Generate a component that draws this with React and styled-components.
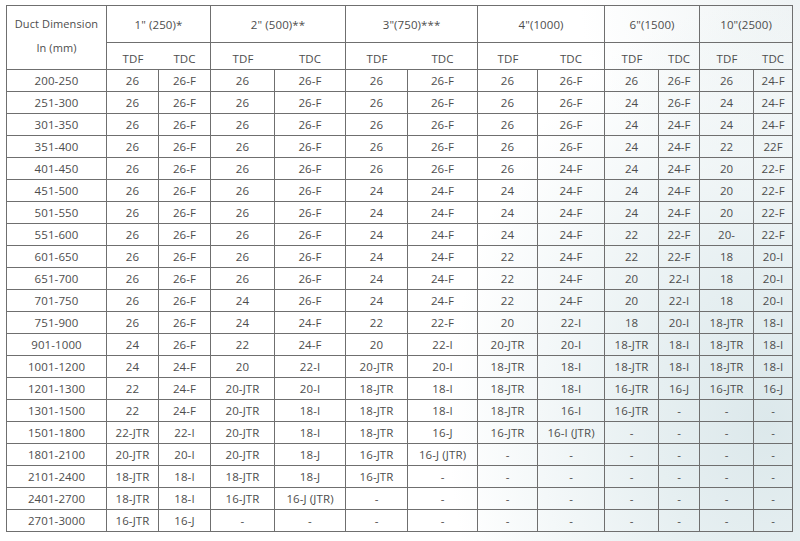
import React from "react";
import styled, { createGlobalStyle } from "styled-components";

const Global = createGlobalStyle`
  html, body { margin: 0; padding: 0; }
  body {
    width: 800px;
    height: 541px;
    overflow: hidden;
    background:
      radial-gradient(ellipse 320px 420px at 96% 78%, #dce8eb 0%, #e6eff1 35%, rgba(255,255,255,0) 100%),
      radial-gradient(ellipse 220px 200px at 100% 0%, #eef3f4 0%, rgba(255,255,255,0) 100%),
      #ffffff;
    font-family: "Open Sans", "Noto Sans", sans-serif;
    color: #4d4d4d;
  }
`;

const Page = styled.div`
  padding: 5px 0 0 6px;
`;

const Table = styled.table`
  border-collapse: separate;
  border-spacing: 0;
  table-layout: fixed;
  width: 787px;
  border-top: 1px solid #6f6f6f;
  border-left: 1px solid #6f6f6f;
`;

const Col = styled.col`
  width: ${(p) => p.$w}px;
`;

const Cell = styled.td`
  padding: 0;
  text-align: center;
  white-space: nowrap;
  border-right: 1px solid #6f6f6f;
  border-bottom: 1px solid #6f6f6f;
  font-size: 11px;
  letter-spacing: 0.1px;
`;

const DimHead = styled(Cell)`
  vertical-align: top;
  font-size: 11px;
  line-height: 24px;
  padding-top: 6px;
`;

const GroupHead = styled(Cell)`
  height: 36px;
  font-size: 11.5px;
`;

const SubHead = styled(Cell)`
  height: 27px;
  font-size: 11.5px;
  padding-top: 4px;
  box-sizing: border-box;
  border-right: ${(p) => (p.$first ? "none" : "1px solid #6f6f6f")};
`;

const DataCell = styled(Cell)`
  height: 21px;
  font-size: 11.5px;
`;

const widths = [100, 52, 52, 64, 71, 62, 70, 60, 67, 54, 41, 54, 39];

const groups = [
  '1" (250)*',
  '2" (500)**',
  '3"(750)***',
  '4"(1000)',
  '6"(1500)',
  '10"(2500)',
];

const rows = [
  ["200-250", "26", "26-F", "26", "26-F", "26", "26-F", "26", "26-F", "26", "26-F", "26", "24-F"],
  ["251-300", "26", "26-F", "26", "26-F", "26", "26-F", "26", "26-F", "24", "26-F", "24", "24-F"],
  ["301-350", "26", "26-F", "26", "26-F", "26", "26-F", "26", "26-F", "24", "24-F", "24", "24-F"],
  ["351-400", "26", "26-F", "26", "26-F", "26", "26-F", "26", "26-F", "24", "24-F", "22", "22F"],
  ["401-450", "26", "26-F", "26", "26-F", "26", "26-F", "26", "24-F", "24", "24-F", "20", "22-F"],
  ["451-500", "26", "26-F", "26", "26-F", "24", "24-F", "24", "24-F", "24", "24-F", "20", "22-F"],
  ["501-550", "26", "26-F", "26", "26-F", "24", "24-F", "24", "24-F", "24", "24-F", "20", "22-F"],
  ["551-600", "26", "26-F", "26", "26-F", "24", "24-F", "24", "24-F", "22", "22-F", "20-", "22-F"],
  ["601-650", "26", "26-F", "26", "26-F", "24", "24-F", "22", "24-F", "22", "22-F", "18", "20-I"],
  ["651-700", "26", "26-F", "26", "26-F", "24", "24-F", "22", "24-F", "20", "22-I", "18", "20-I"],
  ["701-750", "26", "26-F", "24", "26-F", "24", "24-F", "22", "24-F", "20", "22-I", "18", "20-I"],
  ["751-900", "26", "26-F", "24", "24-F", "22", "22-F", "20", "22-I", "18", "20-I", "18-JTR", "18-I"],
  ["901-1000", "24", "26-F", "22", "24-F", "20", "22-I", "20-JTR", "20-I", "18-JTR", "18-I", "18-JTR", "18-I"],
  ["1001-1200", "24", "24-F", "20", "22-I", "20-JTR", "20-I", "18-JTR", "18-I", "18-JTR", "18-I", "18-JTR", "18-I"],
  ["1201-1300", "22", "24-F", "20-JTR", "20-I", "18-JTR", "18-I", "18-JTR", "18-I", "16-JTR", "16-J", "16-JTR", "16-J"],
  ["1301-1500", "22", "24-F", "20-JTR", "18-I", "18-JTR", "18-I", "18-JTR", "16-I", "16-JTR", "-", "-", "-"],
  ["1501-1800", "22-JTR", "22-I", "20-JTR", "18-I", "18-JTR", "16-J", "16-JTR", "16-I (JTR)", "-", "-", "-", "-"],
  ["1801-2100", "20-JTR", "20-I", "20-JTR", "18-J", "16-JTR", "16-J (JTR)", "-", "-", "-", "-", "-", "-"],
  ["2101-2400", "18-JTR", "18-I", "18-JTR", "18-J", "16-JTR", "-", "-", "-", "-", "-", "-", "-"],
  ["2401-2700", "18-JTR", "18-I", "16-JTR", "16-J (JTR)", "-", "-", "-", "-", "-", "-", "-", "-"],
  ["2701-3000", "16-JTR", "16-J", "-", "-", "-", "-", "-", "-", "-", "-", "-", "-"],
];

export default function App() {
  return (
    <>
      <Global />
      <Page>
        <Table>
          <colgroup>
            {widths.map((w, i) => (
              <Col key={i} $w={w} />
            ))}
          </colgroup>
          <thead>
            <tr>
              <DimHead rowSpan={2}>
                Duct Dimension
                <br />
                In (mm)
              </DimHead>
              {groups.map((g) => (
                <GroupHead key={g} colSpan={2}>
                  {g}
                </GroupHead>
              ))}
            </tr>
            <tr>
              {groups.map((g) => (
                <React.Fragment key={g}>
                  <SubHead $first>TDF</SubHead>
                  <SubHead>TDC</SubHead>
                </React.Fragment>
              ))}
            </tr>
          </thead>
          <tbody>
            {rows.map((r) => (
              <tr key={r[0]}>
                {r.map((v, i) => (
                  <DataCell key={i}>{v}</DataCell>
                ))}
              </tr>
            ))}
          </tbody>
        </Table>
      </Page>
    </>
  );
}
